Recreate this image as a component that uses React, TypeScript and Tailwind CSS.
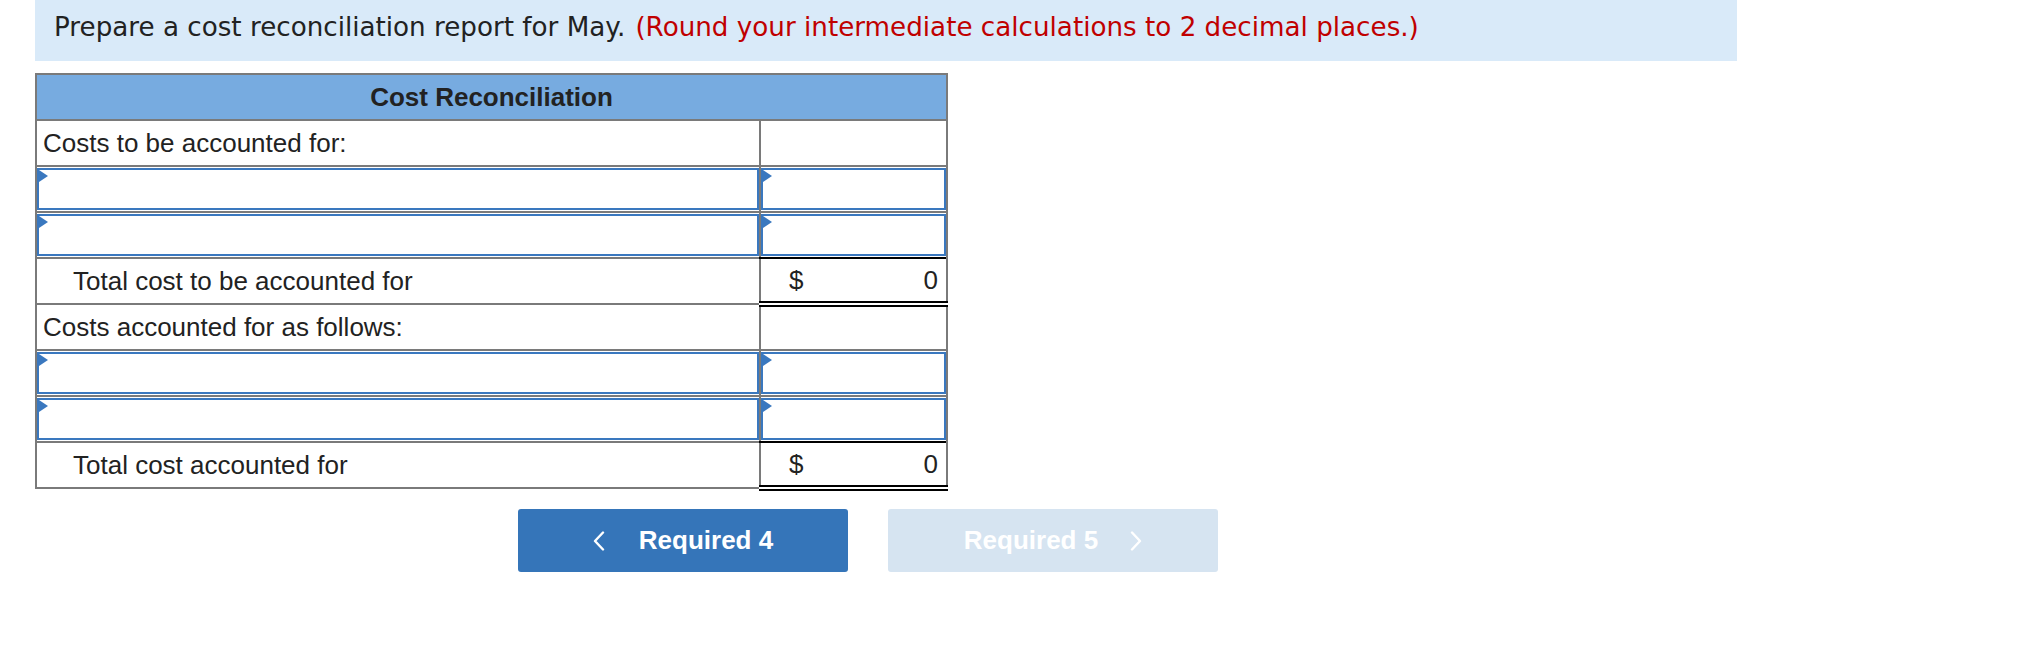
import { FC } from 'react';

const Flag: FC = () => (
  <span className="absolute left-0 top-0 h-0 w-0 border-y-[6px] border-l-[9px] border-y-transparent border-l-[#3a78bf]" />
);

const InputCell: FC = () => (
  <td className="h-[46px] border-2 border-[#7a7a7a] p-0">
    <div className="relative h-[42px] border-2 border-[#3a78bf] bg-white">
      <Flag />
    </div>
  </td>
);

const InputRow: FC = () => (
  <tr>
    <InputCell />
    <InputCell />
  </tr>
);

const LabelRow: FC<{ label: string }> = ({ label }) => (
  <tr>
    <td className="h-[46px] border-2 border-[#7a7a7a] px-[6px] align-middle">{label}</td>
    <td className="h-[46px] border-2 border-[#7a7a7a]"></td>
  </tr>
);

const TotalRow: FC<{ label: string }> = ({ label }) => (
  <tr>
    <td className="h-[46px] border-2 border-[#7a7a7a] pl-[36px] align-middle">{label}</td>
    <td className="h-[46px] border-x-2 border-t-2 border-b-[6px] border-double border-x-[#7a7a7a] border-t-black border-b-black px-[8px]">
      <div className="flex items-center justify-between pl-[20px]">
        <span>$</span>
        <span>0</span>
      </div>
    </td>
  </tr>
);

const Chevron: FC<{ dir: 'left' | 'right' }> = ({ dir }) => (
  <svg width="12" height="20" viewBox="0 0 12 20" fill="none" stroke="white" strokeWidth="2.4" strokeLinecap="round" strokeLinejoin="round">
    {dir === 'left' ? <polyline points="10,1.5 2,10 10,18.5" /> : <polyline points="2,1.5 10,10 2,18.5" />}
  </svg>
);

export default function App() {
  return (
    <div className="min-h-[652px] bg-white text-[#222]" style={{ fontFamily: '"Liberation Sans", Arial, sans-serif' }}>
      <div
        className="ml-[35px] flex h-[61px] w-[1702px] items-center bg-[#d9eaf9] pb-[6px] pl-[19px] text-[26.2px]"
        style={{ fontFamily: '"DejaVu Sans", Verdana, sans-serif' }}
      >
        <span>Prepare a cost reconciliation report for May.</span>
        <span className="ml-[10px] text-[#c00000]">(Round your intermediate calculations to 2 decimal places.)</span>
      </div>

      <table className="ml-[35px] mt-[12px] w-[913px] table-fixed border-collapse border-2 border-[#7a7a7a] text-[26px]">
        <colgroup>
          <col className="w-[724px]" />
          <col />
        </colgroup>
        <thead>
          <tr>
            <th colSpan={2} className="h-[46px] border-2 border-[#7a7a7a] bg-[#77abe0] text-center font-bold">
              Cost Reconciliation
            </th>
          </tr>
        </thead>
        <tbody>
          <LabelRow label="Costs to be accounted for:" />
          <InputRow />
          <InputRow />
          <TotalRow label="Total cost to be accounted for" />
          <LabelRow label="Costs accounted for as follows:" />
          <InputRow />
          <InputRow />
          <TotalRow label="Total cost accounted for" />
        </tbody>
      </table>

      <div className="ml-[518px] mt-[18px] flex gap-[40px] text-[26px] font-bold text-white">
        <button className="flex h-[63px] w-[330px] items-center justify-center gap-[34px] rounded-[3px] bg-[#3575b9]">
          <Chevron dir="left" />
          <span>Required 4</span>
        </button>
        <button className="flex h-[63px] w-[330px] items-center justify-center gap-[32px] rounded-[3px] bg-[#d6e4f1]">
          <span>Required 5</span>
          <Chevron dir="right" />
        </button>
      </div>
    </div>
  );
}
